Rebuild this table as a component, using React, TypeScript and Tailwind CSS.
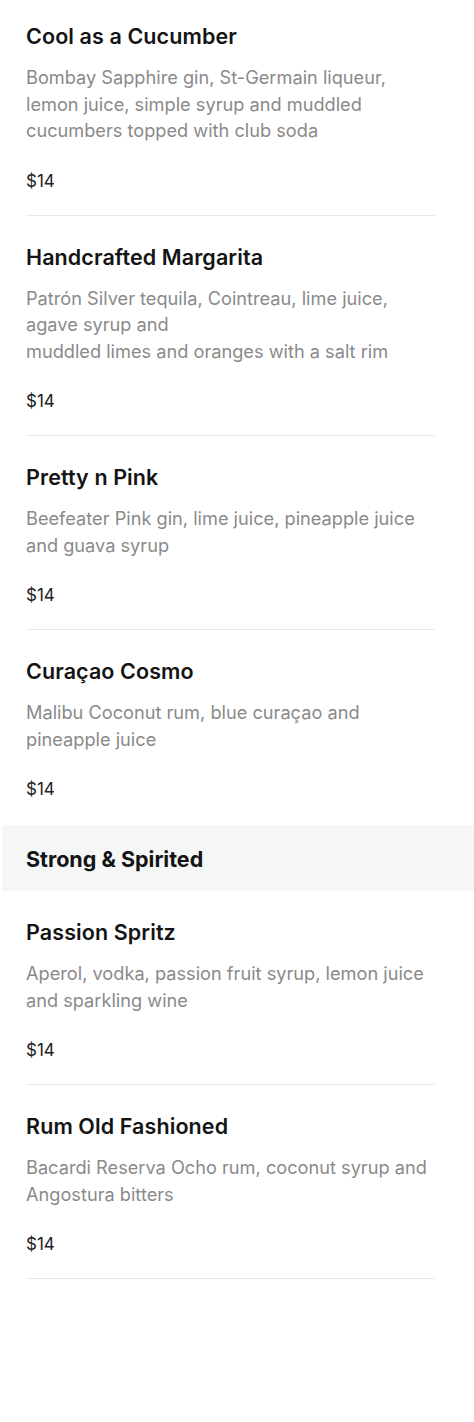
import React from "react";

type Drink = {
  name: string;
  lines: string[];
  price: string;
  divider?: boolean;
};

const classics: Drink[] = [
  {
    name: "Cool as a Cucumber",
    lines: [
      "Bombay Sapphire gin, St-Germain liqueur,",
      "lemon juice, simple syrup and muddled",
      "cucumbers topped with club soda",
    ],
    price: "$14",
    divider: true,
  },
  {
    name: "Handcrafted Margarita",
    lines: [
      "Patrón Silver tequila, Cointreau, lime juice,",
      "agave syrup and",
      "muddled limes and oranges with a salt rim",
    ],
    price: "$14",
    divider: true,
  },
  {
    name: "Pretty n Pink",
    lines: ["Beefeater Pink gin, lime juice, pineapple juice", "and guava syrup"],
    price: "$14",
    divider: true,
  },
  {
    name: "Curaçao Cosmo",
    lines: ["Malibu Coconut rum, blue curaçao and", "pineapple juice"],
    price: "$14",
  },
];

const strong: Drink[] = [
  {
    name: "Passion Spritz",
    lines: ["Aperol, vodka, passion fruit syrup, lemon juice", "and sparkling wine"],
    price: "$14",
    divider: true,
  },
  {
    name: "Rum Old Fashioned",
    lines: ["Bacardi Reserva Ocho rum, coconut syrup and", "Angostura bitters"],
    price: "$14",
    divider: true,
  },
];

const DrinkRow = ({ drink }: { drink: Drink }) => (
  <div className={drink.divider ? "border-b border-[#e9e9e9] pb-[22px]" : "pb-[24px]"}>
    <h3 className="text-[21.5px] leading-[26px] font-semibold tracking-[0.1px] text-[#141414]">{drink.name}</h3>
    <p className="mt-[15px] text-[18.2px] leading-[26.5px] text-[#8a8a8a] whitespace-nowrap">
      {drink.lines.map((l, i) => (
        <span key={i} className="block">
          {l}
        </span>
      ))}
    </p>
    <div className="mt-[25px] text-[17px] leading-[24px] text-[#222]">{drink.price}</div>
  </div>
);

export default function App() {
  return (
    <main className="w-[474px] h-[1422px] bg-white font-['Inter',sans-serif]">
      <section className="pt-[23px] pl-[26px] pr-[39px] flex flex-col gap-[28px]">
        {classics.map((d) => (
          <DrinkRow key={d.name} drink={d} />
        ))}
      </section>

      <div className="ml-[2px] h-[66px] bg-[#f5f6f6] flex items-center pl-[24px] pt-[2px]">
        <h2 className="text-[21.5px] font-bold text-[#141414]">Strong &amp; Spirited</h2>
      </div>

      <section className="pt-[28px] pl-[26px] pr-[39px] flex flex-col gap-[28px]">
        {strong.map((d) => (
          <DrinkRow key={d.name} drink={d} />
        ))}
      </section>
    </main>
  );
}
